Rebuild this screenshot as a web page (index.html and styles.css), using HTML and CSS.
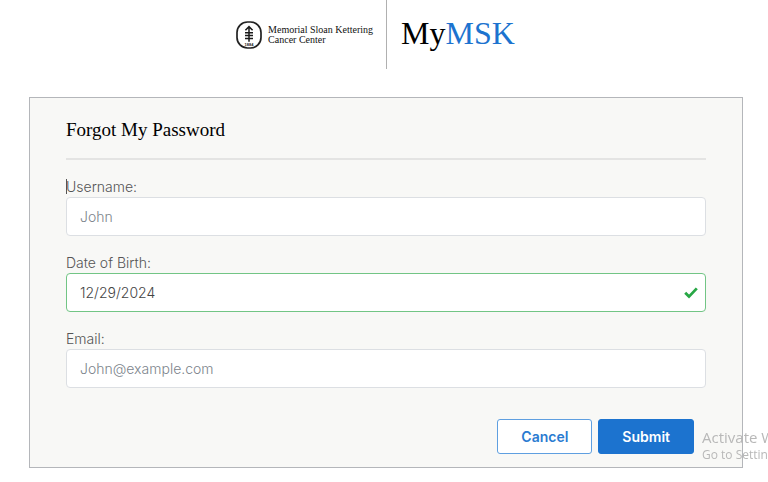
FILE: index.html
```html
<!DOCTYPE html>
<html lang="en">
<head>
    <meta charset="UTF-8">
    <meta name="viewport" content="width=device-width, initial-scale=1.0">
    <title>MyMSK - Forgot My Password</title>
    <link rel="stylesheet" href="styles.css">
</head>
<body>
    <header class="header">
        <div class="logo">
            <svg class="logo-mark" viewBox="0 0 26 28" width="26" height="28" aria-hidden="true">
                <rect x="1" y="1" width="24" height="26" rx="10.5" ry="10.5" fill="#fff" stroke="#222" stroke-width="1.7"/>
                <path d="M13 6V20.8M9.4 9.2L13 5.6l3.6 3.6M9 11.8h8M9 14.6h8M9 17.4h8" fill="none" stroke="#1a1a1a" stroke-width="1.5"/>
                <text x="13" y="25" text-anchor="middle" class="logo-year">1884</text>
            </svg>
            <span class="logo-text">Memorial Sloan Kettering<br>Cancer Center</span>
        </div>
        <div class="brand">My<span>MSK</span></div>
    </header>

    <main class="card">
        <h1>Forgot My Password</h1>
        <form id="forgot-form">
            <div class="form-group">
                <label for="username" class="caret">Username:</label>
                <input type="text" id="username" name="username" placeholder="John">
            </div>
            <div class="form-group">
                <label for="dob">Date of Birth:</label>
                <div class="input-wrap">
                    <input type="text" id="dob" name="dob" class="valid" value="12/29/2024">
                    <svg class="check" viewBox="0 0 14 12" width="14" height="12" aria-hidden="true">
                        <path d="M1.2 5.8L5 9.6L12.8 1.4" fill="none" stroke="#28a745" stroke-width="2.8"/>
                    </svg>
                </div>
            </div>
            <div class="form-group">
                <label for="email">Email:</label>
                <input type="email" id="email" name="email" placeholder="John@example.com">
            </div>
            <div class="buttons">
                <button type="button" class="btn btn-outline">Cancel</button>
                <button type="submit" class="btn btn-primary">Submit</button>
            </div>
        </form>
    </main>

    <div class="watermark">
        <div class="watermark-title">Activate Windows</div>
        <div class="watermark-text">Go to Settings to activate Windows.</div>
    </div>
</body>
</html>
```
FILE: styles.css
```css
* {
    box-sizing: border-box;
}
body {
    margin: 0;
    background-color: #fff;
    color: #555;
    font-family: Inter, "Liberation Sans", sans-serif;
    font-size: 14px;
    font-weight: 300;
}

/* header */
.header {
    display: flex;
    justify-content: center;
    margin-right: 17px;
    margin-bottom: 28px;
}
.logo {
    display: flex;
    align-items: center;
    gap: 6px;
    padding-right: 13px;
    border-right: 1px solid #b0b0b0;
    height: 69px;
}
.logo-year {
    font-family: "Liberation Sans", sans-serif;
    font-size: 4px;
    font-weight: bold;
    fill: #222;
}
.logo-text {
    color: #111;
    font-family: "Liberation Serif", serif;
    font-size: 10px;
    font-weight: normal;
    line-height: 10px;
    white-space: nowrap;
}
.brand {
    padding-left: 14px;
    color: #000;
    font-family: "Liberation Serif", serif;
    font-size: 32px;
    font-weight: normal;
    line-height: 66px;
}
.brand span {
    color: #1c73cf;
}

/* form card */
.card {
    margin: 0 25px 14px 29px;
    padding: 18px 36px 13px;
    background-color: #f8f8f6;
    border: 1px solid #b4b6ba;
}
h1 {
    margin: 0 0 18px;
    padding-bottom: 14px;
    border-bottom: 2px solid #e4e4e3;
    color: #000;
    font-family: "Liberation Serif", serif;
    font-size: 19px;
    font-weight: normal;
    line-height: 28px;
}
.form-group {
    margin-bottom: 18px;
}
.form-group label {
    display: block;
    padding-bottom: 2px;
    line-height: 17px;
}
.caret {
    position: relative;
}
/* text cursor in front of the label */
.caret::before {
    content: "";
    position: absolute;
    left: 0;
    top: 1px;
    width: 1px;
    height: 15px;
    background-color: #555;
}
.form-group input {
    display: block;
    width: 100%;
    height: 39px;
    padding: 0 13px;
    border: 1px solid #dcdfe3;
    border-radius: 4px;
    background-color: #fff;
    color: #444;
    font-family: inherit;
    font-size: 14px;
    font-weight: 300;
}
.form-group input::placeholder {
    color: #7c848c;
    opacity: 1;
}
.form-group input.valid {
    padding-right: 36px;
    border-color: #72c585;
}
.input-wrap {
    position: relative;
}
.check {
    position: absolute;
    right: 8px;
    top: 14px;
}

/* buttons */
.buttons {
    display: flex;
    justify-content: flex-end;
    gap: 6px;
    margin-top: 31px;
    padding-right: 12px;
}
.btn {
    height: 35px;
    padding: 0 23px;
    border: 1px solid #1c73cf;
    border-radius: 3px;
    font-family: inherit;
    font-size: 14px;
    font-weight: 600;
    cursor: pointer;
}
.btn-outline {
    background-color: #fff;
    border-color: #5f9fe0;
    color: #2a7bd1;
}
.btn-primary {
    background-color: #1c73cf;
    color: #fff;
}

/* system overlay, runs off the right edge */
.watermark {
    position: fixed;
    right: 0;
    bottom: 19px;
    width: 66px;
    overflow: hidden;
    color: #b8b8b8;
    font-family: "Open Sans", sans-serif;
    font-weight: normal;
    white-space: nowrap;
    pointer-events: none;
}
.watermark-title {
    font-size: 15px;
    line-height: 20px;
}
.watermark-text {
    font-size: 12px;
    line-height: 16px;
}
```
